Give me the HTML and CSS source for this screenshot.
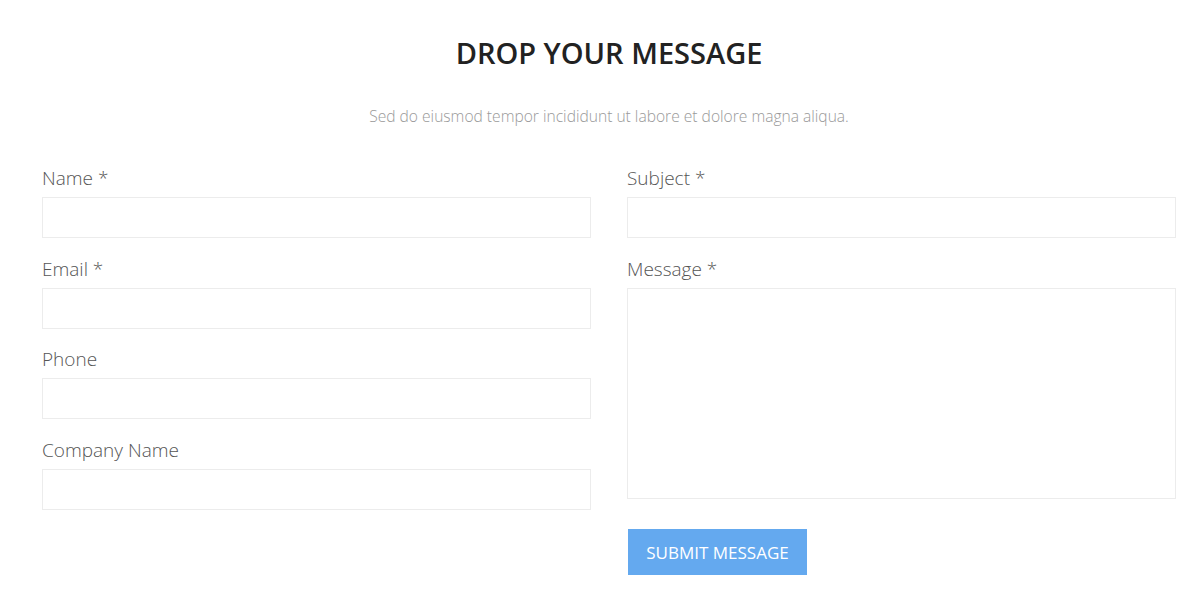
FILE: index.html
```html
<!DOCTYPE html>
<html>
<head>
<meta charset="utf-8">
<link rel="stylesheet" href="styles.css">
</head>
<body>
<section class="contact">
  <h2 class="title">DROP YOUR MESSAGE</h2>
  <p class="subtitle">Sed do eiusmod tempor incididunt ut labore et dolore magna aliqua.</p>
  <form class="form">
    <div class="col">
      <div class="field"><label>Name *</label><input type="text"></div>
      <div class="field"><label>Email *</label><input type="text"></div>
      <div class="field"><label>Phone</label><input type="text"></div>
      <div class="field"><label>Company Name</label><input type="text"></div>
    </div>
    <div class="col">
      <div class="field"><label>Subject *</label><input type="text"></div>
      <div class="field"><label>Message *</label><textarea></textarea></div>
      <div class="actions"><button type="button" class="btn">SUBMIT MESSAGE</button></div>
    </div>
  </form>
</section>
</body>
</html>
```
FILE: styles.css
```css
* { box-sizing: border-box; }
html, body { margin: 0; padding: 0; background: #fff; }
body { font-family: "Open Sans", "Liberation Sans", sans-serif; }
.contact { padding: 34px 27px 0 42px; }
.title {
  margin: 0;
  text-align: center;
  font-size: 29px;
  font-weight: 600;
  color: #222;
  line-height: 38px;
}
.subtitle {
  margin: 33px 0 0;
  text-align: center;
  font-size: 15.6px;
  font-weight: 300;
  color: #999;
  line-height: 22px;
}
.form {
  margin-top: 39px;
  display: grid;
  grid-template-columns: 1fr 1fr;
  column-gap: 36px;
}
.col { display: flex; flex-direction: column; }
.field { display: flex; flex-direction: column; margin-bottom: 18.67px; }
.field label {
  font-size: 19px;
  font-weight: 300;
  color: #555;
  line-height: 25px;
  margin-bottom: 6px;
}
.field input, .field textarea {
  border: 1px solid #ececec;
  background: #fff;
  height: 41px;
  outline: none;
  font-family: inherit;
}
.field textarea { height: 211px; resize: none; }
.actions { margin-top: 12px; }
.btn {
  background: #64a9ef;
  color: #fff;
  border: 0;
  height: 46px;
  width: 179px;
  margin-left: 1px;
  font-family: inherit;
  font-size: 17px;
  font-weight: 400;
  cursor: pointer;
}
```
